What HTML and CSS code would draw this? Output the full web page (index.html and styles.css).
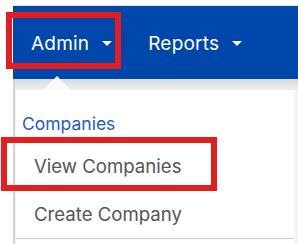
FILE: index.html
```html
<!DOCTYPE html>
<html lang="en">
  <head>
    <meta charset="UTF-8" />
    <meta name="viewport" content="width=device-width, initial-scale=1.0" />
    <title>Admin menu</title>
    <link rel="stylesheet" href="styles.css">
  </head>
  <body>
    <div class="page">
      <nav class="navbar">
        <div class="nav-item nav-admin">Admin<span class="caret"></span></div>
        <div class="nav-item">Reports<span class="caret"></span></div>
      </nav>
      <div class="menu-area">
        <div class="dropdown">
          <div class="dropdown-header">Companies</div>
          <a class="dropdown-item" href="#">View Companies</a>
          <a class="dropdown-item" href="#">Create Company</a>
          <div class="divider"></div>
        </div>
      </div>
    </div>
    <span class="pointer"></span>
    <span class="mark mark-admin"></span>
    <span class="mark mark-view"></span>
  </body>
</html>
```

FILE: styles.css
```css
body {
  margin: 0;
  background-color: #ffffff;
  font-family: Inter, "Noto Sans", sans-serif;
  overflow: hidden;
}
.page {
  margin-left: 13px;
  padding-top: 5px;
}
.navbar {
  display: flex;
  align-items: center;
  height: 73px;
  padding-left: 18px;
  border-top: 1px solid #e2e2e2;
  background-color: #0047ab;
}
.nav-item {
  display: flex;
  align-items: center;
  color: #ffffff;
  font-size: 19px;
  letter-spacing: 0.2px;
  margin-right: 36px;
  padding-top: 2px;
}
.caret {
  width: 0;
  height: 0;
  margin-left: 13px;
  border-top: 5px solid #ffffff;
  border-left: 5px solid transparent;
  border-right: 5px solid transparent;
}
.menu-area {
  height: 154px;
  padding: 11px 4px 0 1px;
  border-left: 2px solid #d2d2d2;
  background: linear-gradient(#dadada, #eeeeee 11px, #f4f4f6 11px);
}
.dropdown {
  height: 100%;
  padding-top: 24px;
  box-sizing: border-box;
  background-color: #ffffff;
}
.dropdown-header {
  padding-left: 6px;
  font-size: 17.5px;
  line-height: 20px;
  color: #1e5bc6;
  margin-bottom: 8px;
}
.dropdown-item {
  display: block;
  padding-left: 18px;
  font-size: 18.6px;
  line-height: 48px;
  color: #555555;
  text-decoration: none;
}
.divider {
  height: 1px;
  background-color: #cccccc;
}
.pointer {
  position: absolute;
  left: 43px;
  top: 76px;
  width: 0;
  height: 0;
  border-bottom: 14px solid #fafafa;
  border-left: 14px solid transparent;
  border-right: 14px solid transparent;
}
.mark {
  position: absolute;
  box-sizing: border-box;
  border: 6px solid #e41e20;
}
.mark-admin {
  left: 6px;
  top: 12px;
  width: 115px;
  height: 57px;
}
.mark-view {
  left: 1px;
  top: 137px;
  width: 216px;
  height: 54px;
}
```
